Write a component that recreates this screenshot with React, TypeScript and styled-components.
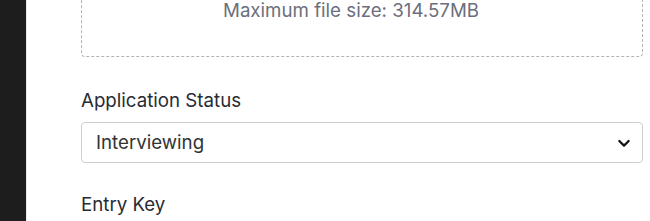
import React from 'react';
import styled, { createGlobalStyle } from 'styled-components';

const GlobalStyle = createGlobalStyle`
  html, body {
    margin: 0;
    padding: 0;
    background: #ffffff;
    font-family: Inter, "Noto Sans", sans-serif;
    overflow: hidden;
  }
`;

const Shell = styled.div`
  display: flex;
  height: 221px;
  overflow: hidden;
`;

const Sidebar = styled.aside`
  width: 26px;
  flex-shrink: 0;
  background: #1d1d1d;
  border-right: 1px solid #ececec;
`;

const Main = styled.main`
  flex: 1;
  padding: 0 7px 0 54px;
  /* page is scrolled: upload box top sits above the fold */
  margin-top: -80px;
`;

const DropZone = styled.div`
  border: 1px dashed #b3b3b3;
  border-radius: 4px;
  height: 137px;
  display: flex;
  flex-direction: column;
  align-items: center;
  justify-content: flex-end;
  padding: 0 22px 33px 0;
  box-sizing: border-box;
  color: #6b6f7d;
  font-size: 18.7px;
`;

const Hint = styled.p`
  margin: 0;
  line-height: 24px;
`;

const Field = styled.div<{ $gap: number }>`
  margin-top: ${(p) => p.$gap}px;
`;

const Label = styled.label`
  display: block;
  font-size: 18.7px;
  color: #272b33;
  line-height: 24px;
  margin-bottom: 9px;
`;

const SelectBox = styled.div`
  height: 41px;
  box-sizing: border-box;
  border: 1px solid #cfcfcf;
  border-radius: 4px;
  display: flex;
  align-items: center;
  justify-content: space-between;
  padding: 0 10px 0 14px;
  font-size: 18.7px;
  color: #333333;
`;

const Chevron = () => (
  <svg width="16" height="16" viewBox="0 0 24 24" fill="none" stroke="#141414" strokeWidth="3.4" strokeLinecap="round" strokeLinejoin="round">
    <path d="M5 9l7 7 7-7" />
  </svg>
);

export default function App() {
  return (
    <Shell>
      <GlobalStyle />
      <Sidebar />
      <Main>
        <DropZone>
          <Hint>Maximum file size: 314.57MB</Hint>
        </DropZone>
        <Field $gap={32}>
          <Label>Application Status</Label>
          <SelectBox>
            <span>Interviewing</span>
            <Chevron />
          </SelectBox>
        </Field>
        <Field $gap={30}>
          <Label>Entry Key</Label>
        </Field>
      </Main>
    </Shell>
  );
}
